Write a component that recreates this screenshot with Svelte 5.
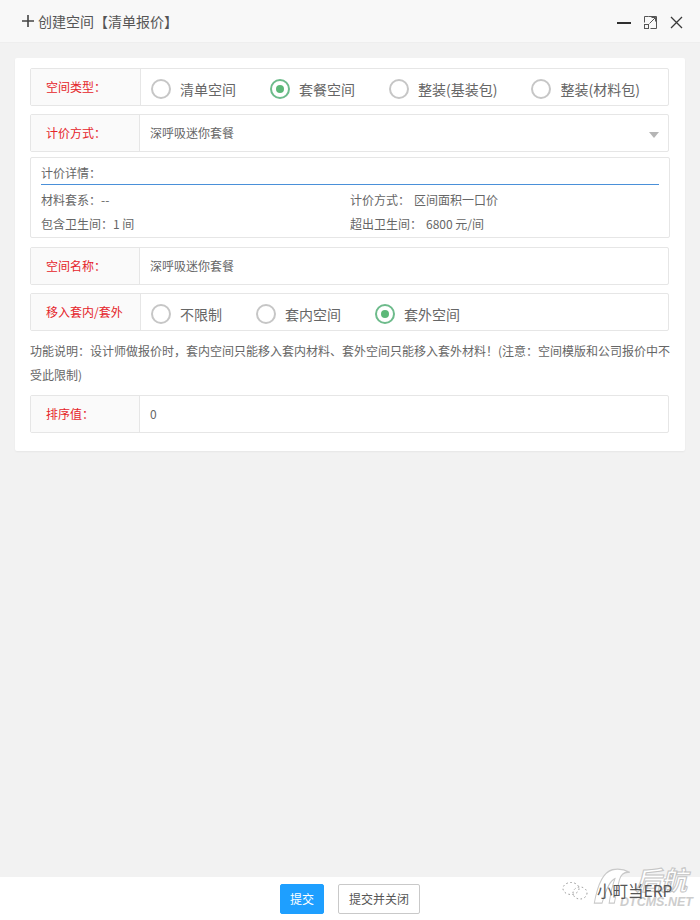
<script>
  const typeOptions = [
    { label: '清单空间', checked: false },
    { label: '套餐空间', checked: true },
    { label: '整装(基装包)', checked: false },
    { label: '整装(材料包)', checked: false }
  ];
  const moveOptions = [
    { label: '不限制', checked: false },
    { label: '套内空间', checked: false },
    { label: '套外空间', checked: true }
  ];
</script>

{#snippet radios(options)}
  <div class="radios">
    {#each options as o}
      <div class="radio">
        <span class="circle" class:on={o.checked}></span>
        <span>{o.label}</span>
      </div>
    {/each}
  </div>
{/snippet}

<div class="page">
  <header class="head">
    <div class="title">
      <svg class="plus" width="14" height="14" viewBox="0 0 14 14"><path d="M7 1v12M1 7h12" stroke="#444" stroke-width="1.6" fill="none"/></svg>
      <span>创建空间【清单报价】</span>
    </div>
    <div class="winbtns">
      <svg width="15" height="15" viewBox="0 0 15 15"><path d="M0 8h14" stroke="#2f2f2f" stroke-width="2" fill="none"/></svg>
      <svg width="15" height="15" viewBox="0 0 15 15" fill="none" stroke="#555" stroke-width="1"><path d="M5.5 1.5h8v12h-6M1.5 7.500v-6h4"/><rect x="1.500" y="9.500" width="4" height="4"/><path d="M6.500 8.500l6-6M8.500 2.500h4v4"/></svg>
      <svg width="15" height="15" viewBox="0 0 15 15"><path d="M2 2l11 11M13 2L2 13" stroke="#3a3a3a" stroke-width="1.300" fill="none"/></svg>
    </div>
  </header>

  <main class="main">
    <section class="card">
      <div class="row">
        <div class="label wide">空间类型：</div>
        {@render radios(typeOptions)}
      </div>

      <div class="row select short">
        <div class="label">计价方式：</div>
        <div class="value">深呼吸迷你套餐</div>
        <span class="caret"></span>
      </div>

      <div class="detail">
        <div class="detail-title">计价详情：</div>
        <div class="detail-grid">
          <div>材料套系：--</div>
          <div>计价方式：<span class="val">区间面积一口价</span></div>
          <div>包含卫生间：1 间</div>
          <div>超出卫生间：<span class="val">6800 元/间</span></div>
        </div>
      </div>

      <div class="row short">
        <div class="label">空间名称：</div>
        <div class="value">深呼吸迷你套餐</div>
      </div>

      <div class="row tight">
        <div class="label wide">移入套内/套外</div>
        {@render radios(moveOptions)}
      </div>

      <p class="note">功能说明：设计师做报价时，套内空间只能移入套内材料、套外空间只能移入套外材料！(注意：空间模版和公司报价中不受此限制)</p>

      <div class="row short last">
        <div class="label">排序值：</div>
        <div class="value">0</div>
      </div>
    </section>
  </main>

  <footer class="foot">
    <button class="btn primary">提交</button>
    <button class="btn">提交并关闭</button>
  </footer>

  <div class="mark">
    <svg class="wechat" width="26" height="18" viewBox="0 0 26 18" fill="none" stroke="#777" stroke-width="0.800" stroke-dasharray="1.500 2.500"><ellipse cx="9" cy="6.500" rx="8" ry="6"/><ellipse cx="18" cy="11" rx="7" ry="6"/></svg>
    <svg class="swoosh" width="40" height="38" viewBox="0 0 62 42" preserveAspectRatio="none" fill="#fff" stroke="#c9c9c9" stroke-width="1.500"><path d="M2 40C6 24 13 6 30 3c12-2 22 1 27 3-8-1-13 1-16 8-3 8-6 19-8 26h-8c2-9 5-20 9-27-8 2-14 12-20 27z"/></svg>
    <span class="hou">后航</span>
    <span class="dt">DTCMS.NET</span>
    <span class="erp">小町当ERP</span>
  </div>
</div>

<style>
  :global(body) { margin: 0; }
  .page {
    position: relative;
    width: 700px;
    height: 920px;
    display: flex;
    flex-direction: column;
    background: #f2f2f2;
    color: #666;
    font: 12px/1.5 "Noto Sans CJK SC", "Liberation Sans", sans-serif;
    overflow: hidden;
  }
  .head {
    height: 42px;
    flex: none;
    display: flex;
    align-items: center;
    justify-content: space-between;
    padding: 0 16px 0 21px;
    background: #f8f8f8;
    border-bottom: 1px solid #eee;
  }
  .title {
    display: flex;
    align-items: center;
    gap: 3px;
    font-size: 14px;
    color: #555;
  }
  .plus { flex: none; }
  .winbtns { display: flex; gap: 11px; margin-top: 2px; }
  .main { flex: 1; padding: 15px 15px 0; }
  .card {
    background: #fff;
    padding: 10px 16px 18px 15px;
    box-shadow: 0 1px 2px rgba(0, 0, 0, .05);
    border-radius: 2px;
  }
  .row {
    display: flex;
    align-items: stretch;
    height: 38px;
    box-sizing: border-box;
    border: 1px solid #e6e6e6;
    margin-bottom: 8px;
    position: relative;
    border-radius: 2px;
  }
  .row.short { width: 639px; }
  .row.select { margin-bottom: 5px; }
  .row.tight { margin-bottom: 0; }
  .row.last { margin-bottom: 0; }
  .label {
    width: 109px;
    flex: none;
    box-sizing: border-box;
    padding-left: 15px;
    display: flex;
    align-items: center;
    color: #e5252a;
    background: #fafafa;
    border-right: 1px solid #e6e6e6;
  }
  .label.wide { width: 110px; }
  .value {
    padding-left: 10px;
    display: flex;
    align-items: center;
    color: #666;
  }
  .caret {
    position: absolute;
    right: 9px;
    top: 17px;
    border: 5px solid transparent;
    border-top: 6px solid #b5b5b5;
    border-bottom: 0;
  }
  .radios {
    display: flex;
    align-items: center;
    gap: 34px;
    padding: 4px 0 0 10px;
    font-size: 14px;
    color: #666;
  }
  .radio { display: flex; align-items: center; gap: 9px; white-space: nowrap; }
  .circle {
    width: 20px;
    height: 20px;
    box-sizing: border-box;
    border: 2px solid #c6c6c6;
    border-radius: 50%;
    display: flex;
    align-items: center;
    justify-content: center;
    margin-top: -1px;
  }
  .circle.on { border-color: #6dbb8b; }
  .circle.on::after {
    content: "";
    width: 8px;
    height: 8px;
    border-radius: 50%;
    background: #5cb878;
  }
  .detail {
    height: 81px;
    box-sizing: border-box;
    border: 1px solid #e6e6e6;
    padding: 0 10px;
    margin-bottom: 9px;
    width: 640px;
    border-radius: 2px;
  }
  .detail-title {
    height: 26px;
    line-height: 29px;
    border-bottom: 1px solid #4a90d9;
  }
  .detail-grid {
    display: grid;
    grid-template-columns: 309px 1fr;
    grid-auto-rows: 24px;
    line-height: 24px;
    padding-top: 3px;
  }
  .val { margin-left: 4px; }
  .note {
    margin: 8px -6px 8px 0;
    line-height: 24px;
  }
  .foot {
    height: 43px;
    flex: none;
    background: #fff;
    display: flex;
    justify-content: center;
    align-items: center;
    gap: 14px;
  }
  .btn {
    height: 30px;
    width: 82px;
    box-sizing: border-box;
    padding: 0;
    border: 1px solid #c9c9c9;
    background: #fff;
    color: #555;
    border-radius: 2px;
    font: inherit;
    margin-top: 1px;
  }
  .btn.primary {
    width: 44px;
    background: #1e9fff;
    border-color: #1e9fff;
    color: #fff;
    margin-top: 0;
  }
  .mark { position: absolute; left: 560px; top: 862px; width: 140px; height: 50px; }
  .wechat { position: absolute; left: 2px; top: 20px; }
  .swoosh { position: absolute; left: 33px; top: 5px; }
  .hou {
    position: absolute;
    left: 75px;
    top: 2px;
    white-space: nowrap;
    font: italic 700 26px/30px "Noto Sans CJK SC", sans-serif;
    color: #fff;
    -webkit-text-stroke: 1px #c4c4c4;
  }
  .dt {
    position: absolute;
    left: 60px;
    top: 35px;
    white-space: nowrap;
    font: italic 700 12.500px/10px "Liberation Sans", sans-serif;
    color: #cdcdcd;
  }
  .erp {
    position: absolute;
    left: 37px;
    top: 18px;
    white-space: nowrap;
    font-size: 15.500px;
    line-height: 20px;
    color: #555;
  }
</style>
